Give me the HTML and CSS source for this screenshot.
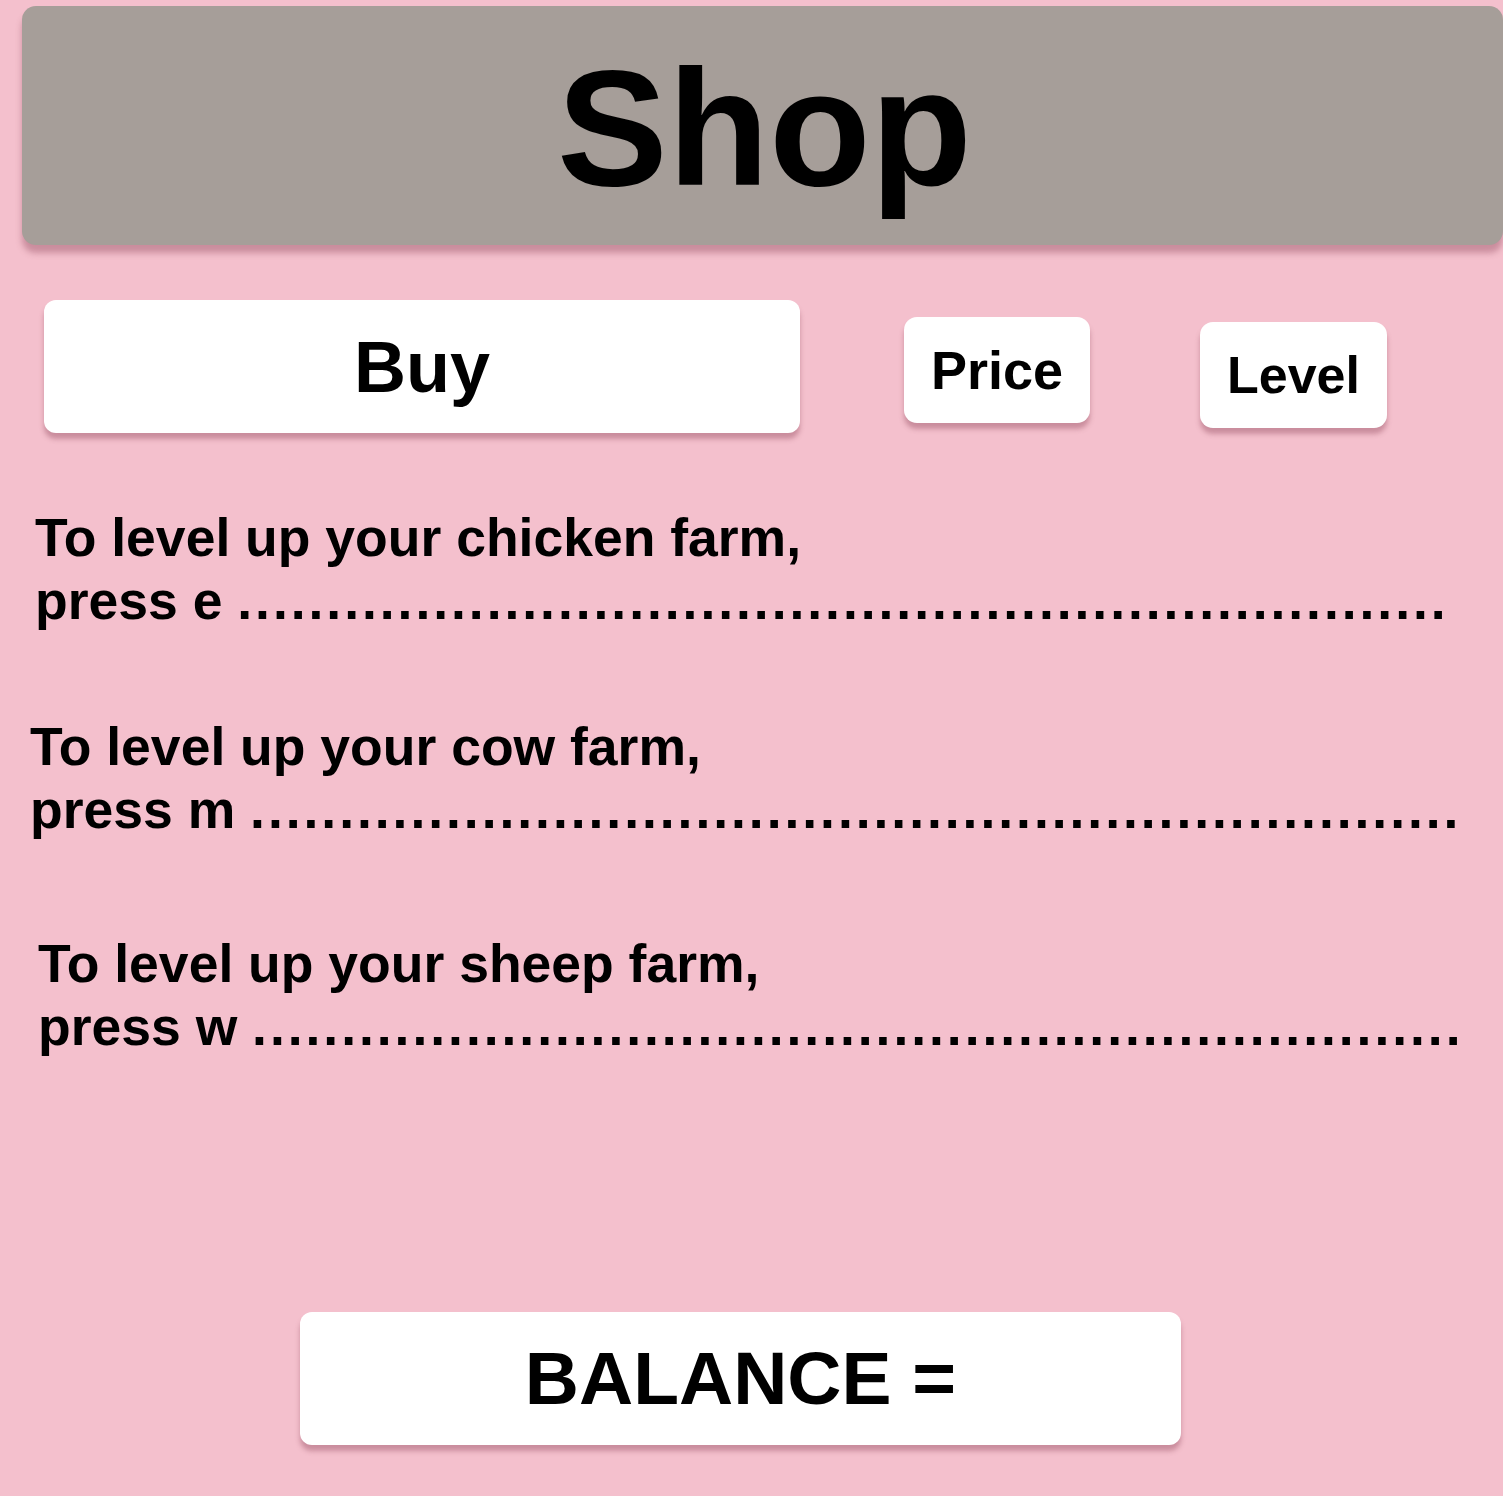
FILE: index.html
```html
<!DOCTYPE html>
<html lang="en">
<head>
<meta charset="utf-8">
<title>Shop</title>
<link rel="stylesheet" href="styles.css">
</head>
<body>
<div class="page">
  <header class="title-bar"><h1 class="title">Shop</h1></header>

  <div class="tabs">
    <div class="tab tab-buy">Buy</div>
    <div class="tab tab-price">Price</div>
    <div class="tab tab-level">Level</div>
  </div>

  <section class="items">
    <p class="item item-chicken">To level up your chicken farm,<br>press e <span class="leader">....................................................................</span></p>
    <p class="item item-cow">To level up your cow farm,<br>press m <span class="leader">....................................................................</span></p>
    <p class="item item-sheep">To level up your sheep farm,<br>press w <span class="leader">....................................................................</span></p>
  </section>

  <div class="balance">BALANCE =</div>
</div>
</body>
</html>
```
FILE: styles.css
```css
html, body {
  margin: 0;
  padding: 0;
}
body {
  background: #f4c0cd;
  font-family: "Liberation Sans", Arial, Helvetica, sans-serif;
  font-weight: bold;
  color: #000;
  width: 1503px;
  height: 1496px;
  overflow: hidden;
}
.page {
  display: flex;
  flex-direction: column;
  padding-top: 6px;
}
.title-bar {
  margin-left: 22px;
  width: 1481px;
  height: 239px;
  background: #a69e99;
  border-radius: 14px;
  box-shadow: 0 8px 6px rgba(150, 80, 100, 0.45);
  display: flex;
  align-items: center;
  justify-content: center;
}
.title {
  margin: 0;
  font-size: 166px;
  line-height: 1;
  font-weight: bold;
  padding-top: 4px;
  padding-left: 4px;
}
.tabs {
  display: flex;
  align-items: flex-start;
  margin-top: 55px;
  padding-left: 44px;
}
.tab {
  background: #fff;
  display: flex;
  align-items: center;
  justify-content: center;
  box-shadow: 0 6px 5px rgba(150, 80, 100, 0.45);
  line-height: 1;
  flex: none;
}
.tab-buy {
  width: 756px;
  height: 133px;
  border-radius: 12px;
  font-size: 72px;
}
.tab-price {
  margin-left: 104px;
  margin-top: 17px;
  width: 186px;
  height: 106px;
  border-radius: 13px;
  font-size: 54px;
}
.tab-level {
  margin-left: 110px;
  margin-top: 22px;
  width: 187px;
  height: 106px;
  border-radius: 13px;
  font-size: 52px;
}
.items {
  display: flex;
  flex-direction: column;
}
.item {
  margin: 0;
  font-size: 53.5px;
  line-height: 63px;
  white-space: nowrap;
}
.leader {
  letter-spacing: 2.95px;
}
.item-chicken {
  margin-top: 73px;
  padding-left: 35px;
}
.item-cow {
  margin-top: 83px;
  padding-left: 30px;
}
.item-sheep {
  margin-top: 91px;
  padding-left: 38px;
}
.balance {
  margin-top: 254px;
  margin-left: 300px;
  width: 881px;
  height: 133px;
  background: #fff;
  border-radius: 12px;
  box-shadow: 0 6px 5px rgba(150, 80, 100, 0.45);
  display: flex;
  align-items: center;
  justify-content: center;
  font-size: 75px;
  line-height: 1;
}
```
